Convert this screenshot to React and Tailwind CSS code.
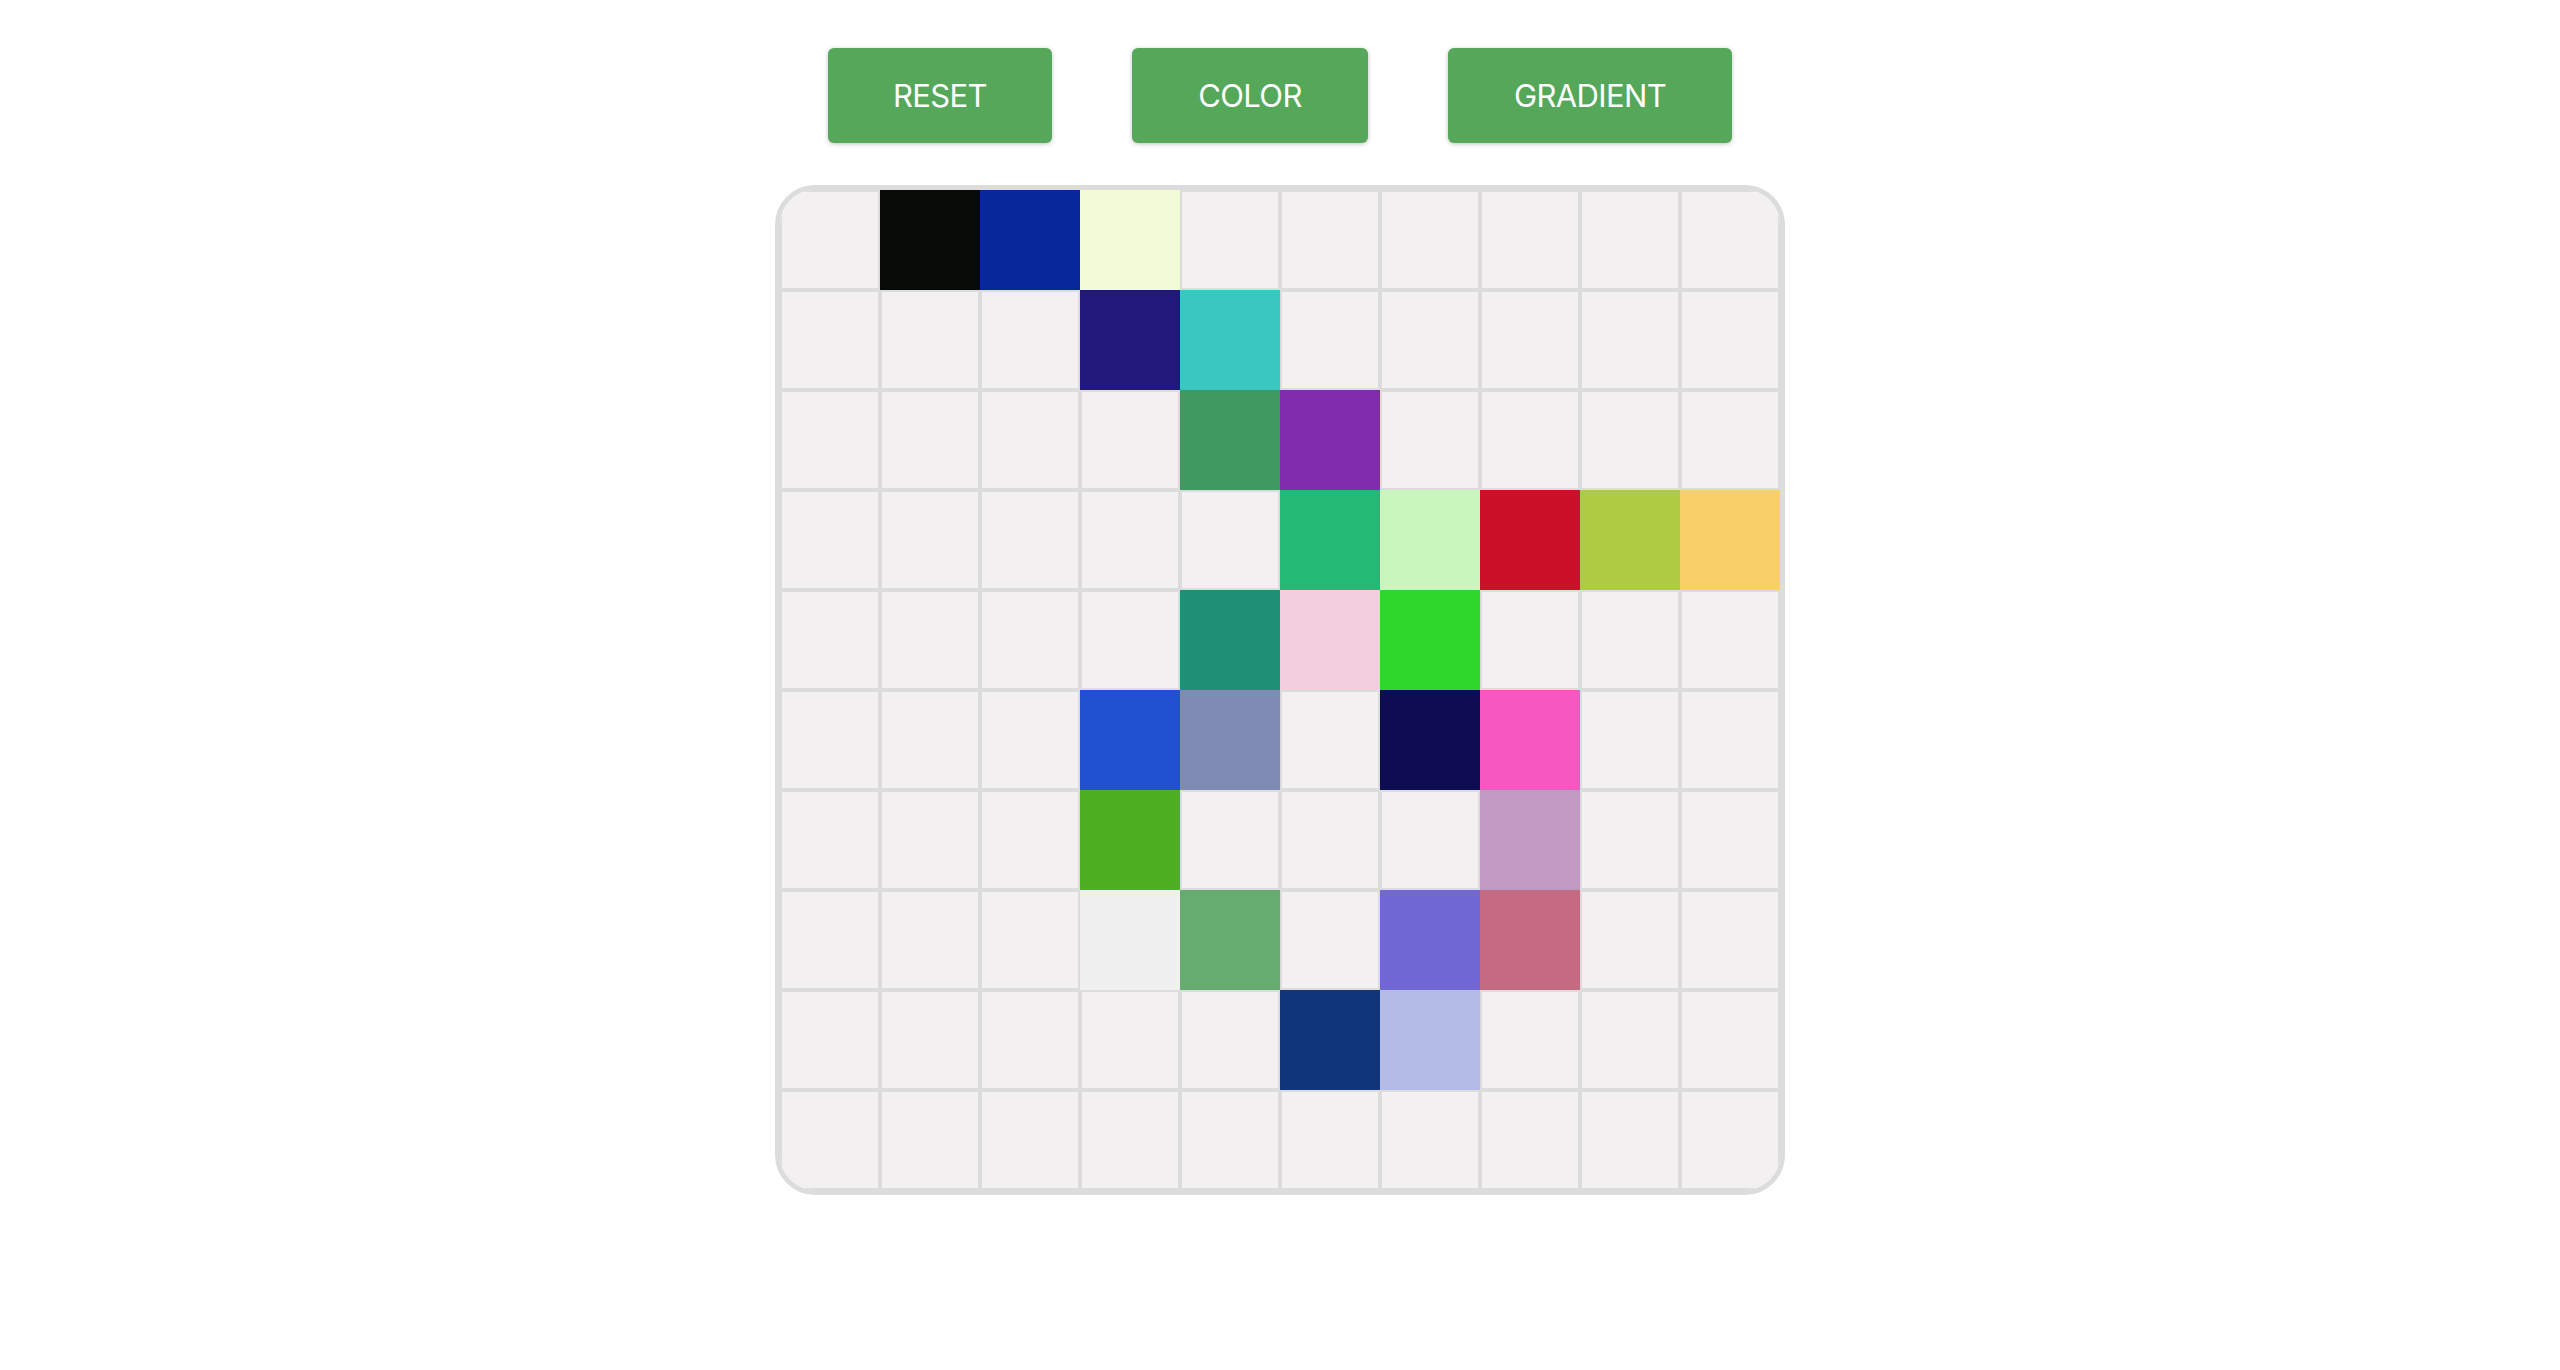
import React from "react";

const E = null;
const grid = [
  [E, "#060b07", "#07289a", "#f1fcd6", E, E, E, E, E, E],
  [E, E, E, "#22177a", "#3bc7c1", E, E, E, E, E],
  [E, E, E, E, "#3f9a61", "#812cae", E, E, E, E],
  [E, E, E, E, E, "#24b975", "#c9f6bd", "#cb1129", "#afcb44", "#f9cf68"],
  [E, E, E, E, "#1f8f76", "#f3cedf", "#2fd72c", E, E, E],
  [E, E, E, "#2150d1", "#7f8bb3", E, "#0e0d51", "#f558c1", E, E],
  [E, E, E, "#4faf22", E, E, E, "#c299c3", E, E],
  [E, E, E, "#eff0ef", "#66ab70", E, "#7168d6", "#c46a83", E, E],
  [E, E, E, E, E, "#10357b", "#b4bce6", E, E, E],
  [E, E, E, E, E, E, E, E, E, E],
];

function Btn({ children, w }) {
  return (
    <button
      className={`${w} h-[95px] flex items-center justify-center rounded-[6px] bg-[#55a75a] text-white text-[31px] tracking-[-0.02em] leading-none shadow-[0_1px_4px_rgba(0,0,0,0.25)] font-['Inter',sans-serif]`}
    >
      {children}
    </button>
  );
}

export default function App() {
  return (
    <div className="min-h-[1370px] w-full bg-white flex flex-col items-center pt-[48px] font-['Inter',sans-serif]">
      <div className="flex gap-[80px]">
        <Btn w="w-[224px]">RESET</Btn>
        <Btn w="w-[236px]">COLOR</Btn>
        <Btn w="w-[284px]">GRADIENT</Btn>
      </div>
      <div className="mt-[42px] border-[5px] border-[#dcdcdc] rounded-[40px] overflow-hidden">
        <div className="grid grid-cols-[repeat(10,100px)] grid-rows-[repeat(10,100px)]">
          {grid.flat().map((c, i) =>
            c ? (
              <div key={i} className="w-[100px] h-[100px]" style={{ backgroundColor: c }} />
            ) : (
              <div key={i} className="w-[100px] h-[100px] bg-[#f2f0f1] border-2 border-[#dcdcdc]" />
            )
          )}
        </div>
      </div>
    </div>
  );
}
